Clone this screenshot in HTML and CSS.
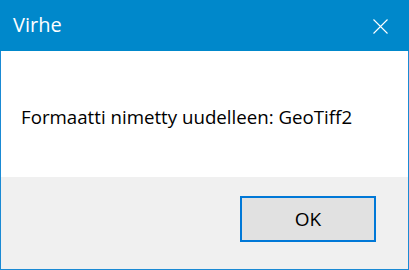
FILE: index.html
```html
<!DOCTYPE html>
<html lang="fi">
<head>
    <meta charset="UTF-8">
    <title>Virhe</title>
    <link rel="stylesheet" href="styles.css">
</head>
<body>

    <div class="dialog">
        <!-- Title bar -->
        <div class="titlebar">
            <span class="title">Virhe</span>
            <button class="close" aria-label="Sulje">
                <svg width="15" height="15" viewBox="0 0 15 15">
                    <path d="M0.5 0.5 L14.5 14.5 M14.5 0.5 L0.5 14.5" stroke="#fff" stroke-width="1.1" fill="none"/>
                </svg>
            </button>
        </div>

        <!-- Message -->
        <div class="content">
            <p class="message">Formaatti nimetty uudelleen: GeoTiff2</p>
        </div>

        <!-- Buttons -->
        <div class="footer">
            <button class="ok">OK</button>
        </div>
    </div>

</body>
</html>
```

FILE: styles.css
```css
/* Reset */
* {
    box-sizing: border-box;
}

body {
    margin: 0;
    width: 409px;
    height: 270px;
    font-family: "Open Sans", "Noto Sans", sans-serif;
}

/* Window frame */
.dialog {
    display: flex;
    flex-direction: column;
    width: 409px;
    height: 270px;
    border: 1px solid #1a8ad4;
    border-top: none;
    background-color: #fff;
}

/* Title bar */
.titlebar {
    display: flex;
    align-items: center;
    justify-content: space-between;
    height: 51px;
    margin: 0 -1px;
    padding: 0 21px 0 13px;
    background-color: #0088cb;
    color: #fff;
}

.title {
    font-size: 20px;
    padding-bottom: 2px;
}

.close {
    display: flex;
    padding: 0;
    border: none;
    background: none;
    margin-top: 1px;
}

/* Message area */
.content {
    height: 126px;
    padding: 53px 0 0 20px;
}

.message {
    margin: 0;
    font-size: 18.7px;
    color: #000;
    line-height: 26px;
}

/* Button area */
.footer {
    flex: 1;
    display: flex;
    justify-content: flex-end;
    align-items: flex-start;
    padding: 19px 32px 0 0;
    background-color: #f0f0f0;
}

.ok {
    width: 136px;
    height: 46px;
    border: 2px solid #0078d7;
    background-color: #e1e1e1;
    font-family: inherit;
    font-size: 19px;
    color: #000;
    padding: 0;
}
```
